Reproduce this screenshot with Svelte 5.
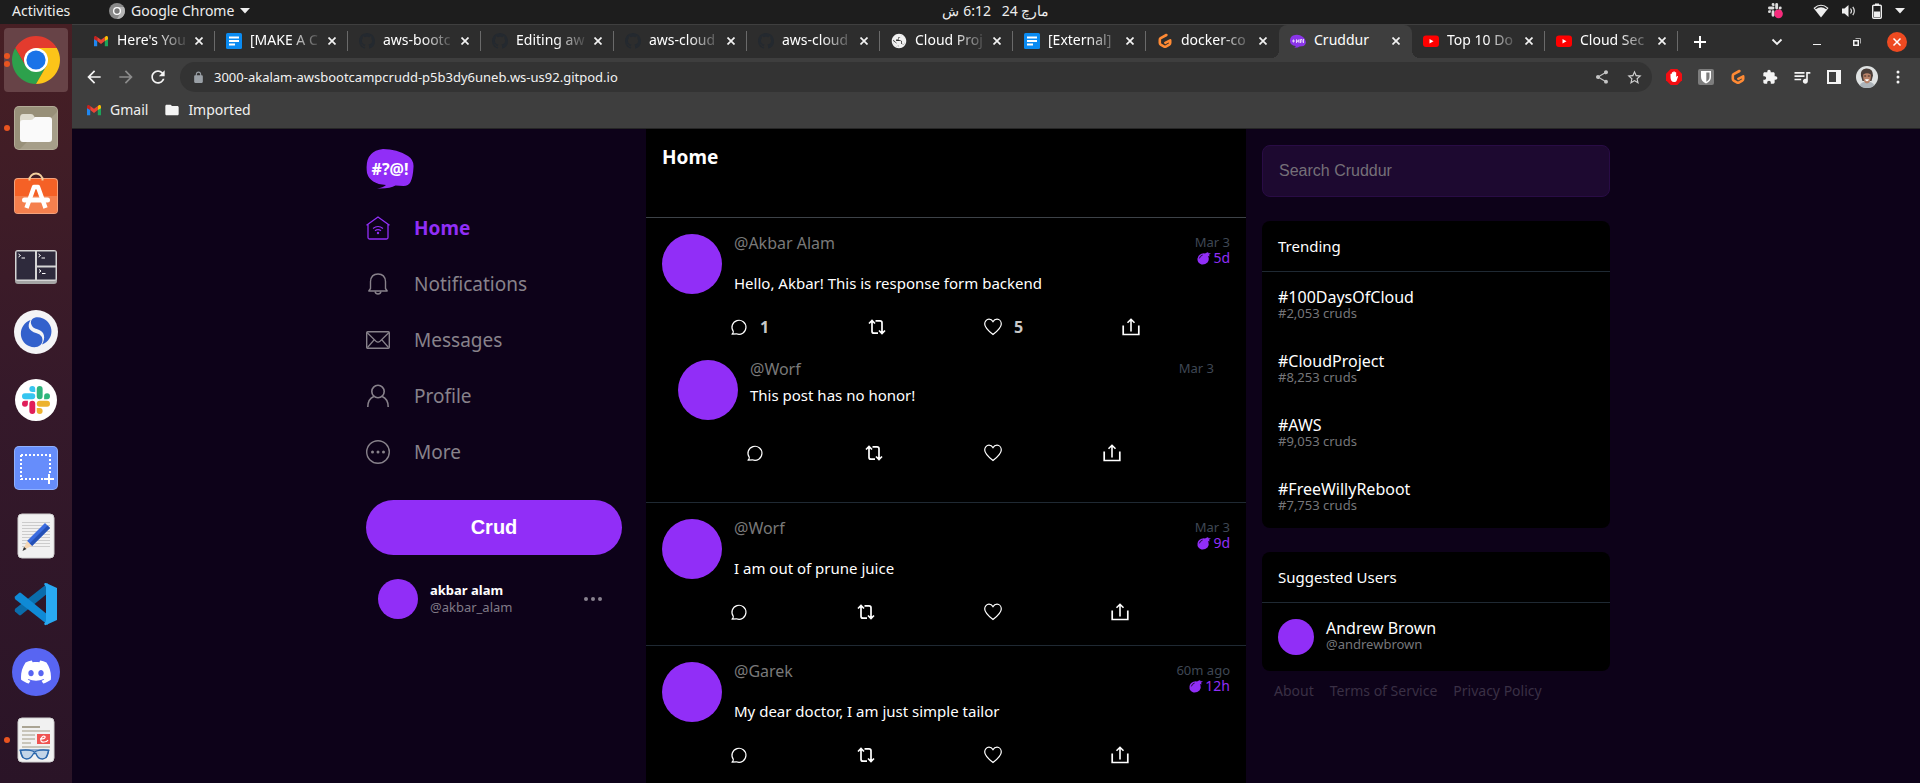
<script>
  const dock = [
    { name: 'chrome', dots: 2, active: true },
    { name: 'files', dots: 1 },
    { name: 'software', dots: 0 },
    { name: 'terminal', dots: 0 },
    { name: 'simplenote', dots: 0 },
    { name: 'slack', dots: 0 },
    { name: 'capture', dots: 0 },
    { name: 'editor', dots: 0 },
    { name: 'vscode', dots: 0 },
    { name: 'discord', dots: 0 },
    { name: 'reader', dots: 1 }
  ];

  const tabs = [
    { icon: 'gmail', title: "Here's You" },
    { icon: 'doc', title: '[MAKE A C' },
    { icon: 'github', title: 'aws-bootc' },
    { icon: 'github', title: 'Editing aw' },
    { icon: 'github', title: 'aws-cloud' },
    { icon: 'github', title: 'aws-cloud' },
    { icon: 'globe', title: 'Cloud Proj' },
    { icon: 'doc', title: '[External]' },
    { icon: 'gitpod', title: 'docker-co' },
    { icon: 'cruddur', title: 'Cruddur', active: true },
    { icon: 'youtube', title: 'Top 10 Do' },
    { icon: 'youtube', title: 'Cloud Sec' }
  ];

  const nav = [
    { icon: 'home', label: 'Home', active: true },
    { icon: 'bell', label: 'Notifications' },
    { icon: 'mail', label: 'Messages' },
    { icon: 'person', label: 'Profile' },
    { icon: 'more', label: 'More' }
  ];

  const posts = [
    {
      handle: '@Akbar Alam', time: 'Mar 3', expires: '5d',
      message: 'Hello, Akbar! This is response form backend',
      replies: 1, likes: 5,
      thread: [{ handle: '@Worf', time: 'Mar 3', message: 'This post has no honor!' }]
    },
    { handle: '@Worf', time: 'Mar 3', expires: '9d', message: 'I am out of prune juice' },
    { handle: '@Garek', time: '60m ago', expires: '12h', message: 'My dear doctor, I am just simple tailor' }
  ];

  const trending = [
    { tag: '#100DaysOfCloud', count: '#2,053 cruds' },
    { tag: '#CloudProject', count: '#8,253 cruds' },
    { tag: '#AWS', count: '#9,053 cruds' },
    { tag: '#FreeWillyReboot', count: '#7,753 cruds' }
  ];
</script>

{#snippet slackMark(a, b, c, d)}
  <path fill={a} d="M5.042 15.165a2.528 2.528 0 0 1-2.52 2.523A2.528 2.528 0 0 1 0 15.165a2.527 2.527 0 0 1 2.522-2.52h2.52v2.52zM6.313 15.165a2.527 2.527 0 0 1 2.521-2.52 2.527 2.527 0 0 1 2.521 2.52v6.313A2.528 2.528 0 0 1 8.834 24a2.528 2.528 0 0 1-2.521-2.522v-6.313z" />
  <path fill={b} d="M8.834 5.042a2.528 2.528 0 0 1-2.521-2.52A2.528 2.528 0 0 1 8.834 0a2.528 2.528 0 0 1 2.521 2.522v2.52H8.834zM8.834 6.313a2.528 2.528 0 0 1 2.521 2.521 2.528 2.528 0 0 1-2.521 2.521H2.522A2.528 2.528 0 0 1 0 8.834a2.528 2.528 0 0 1 2.522-2.521h6.312z" />
  <path fill={c} d="M18.956 8.834a2.528 2.528 0 0 1 2.522-2.521A2.528 2.528 0 0 1 24 8.834a2.528 2.528 0 0 1-2.522 2.521h-2.522V8.834zM17.688 8.834a2.528 2.528 0 0 1-2.523 2.521 2.527 2.527 0 0 1-2.52-2.521V2.522A2.527 2.527 0 0 1 15.165 0a2.528 2.528 0 0 1 2.523 2.522v6.312z" />
  <path fill={d} d="M15.165 18.956a2.528 2.528 0 0 1 2.523 2.522A2.528 2.528 0 0 1 15.165 24a2.527 2.527 0 0 1-2.52-2.522v-2.522h2.52zM15.165 17.688a2.527 2.527 0 0 1-2.52-2.523 2.526 2.526 0 0 1 2.52-2.52h6.313A2.527 2.527 0 0 1 24 15.165a2.528 2.528 0 0 1-2.522 2.523h-6.313z" />
{/snippet}

{#snippet dockIcon(name)}
  <svg width="48" height="48" viewBox="0 0 48 48" aria-hidden="true">
    {#if name === 'chrome'}
      <path fill="#e33b2e" d="M24 12H44.78A24 24 0 0 0 3.22 12L13.6 30z" />
      <path fill="#2da14c" d="M13.6 30L3.22 12A24 24 0 0 0 24 48L34.39 30z" />
      <path fill="#fcc419" d="M34.39 30L24 48A24 24 0 0 0 44.78 12H24z" />
      <circle cx="24" cy="24" r="12" fill="#fff" />
      <circle cx="24" cy="24" r="9.6" fill="#1a73e8" />
    {:else if name === 'files'}
      <rect x="2" y="2" width="44" height="44" rx="5" fill="#b3ab97" />
      <rect x="3" y="3" width="42" height="42" rx="4" fill="#989079" />
      <path d="M45 8V41a4 4 0 0 1-4 4H8z" fill="#a69e89" />
      <path d="M8 14q0-4 3-4h8q2 0 3 2l1 2v6H8z" fill="#dfdccf" />
      <path d="M11 16h8q2 0 3-2l1-1h14q3 0 3 3v19q0 3-3 3H11q-3 0-3-3V19q0-3 3-3z" fill="#fafafa" />
    {:else if name === 'software'}
      <path d="M17.5 9v-1a6.5 6.5 0 0 1 13 0v1" fill="none" stroke="#f3cf9e" stroke-width="2" />
      <rect x="2" y="6" width="44" height="36" rx="4" fill="#f4a27c" />
      <rect x="3" y="7" width="42" height="34" rx="3" fill="#f56126" />
      <path d="M3 24h42v14a3 3 0 0 1-3 3H6a3 3 0 0 1-3-3z" fill="#f5804e" />
      <path d="M30.5 5.5v3M17.5 5.5v3" stroke="#f3cf9e" stroke-width="2" />
      <path d="M14.5 36L22 15h4l7.500 21" fill="none" stroke="#fff" stroke-width="4.400" stroke-linejoin="round" />
      <rect x="10" y="25.500" width="28" height="5" rx="2.500" fill="#fff" />
    {:else if name === 'terminal'}
      <path d="M3 37h42v4q0 3-3 3H6q-3 0-3-3z" fill="#a5a5a5" />
      <rect x="3" y="10" width="42" height="31" rx="3" fill="#d5d5d5" />
      <path d="M4.500 11.500h18.500v28H4.500zM25 11.500h18.500v14H25zM25 27.500h18.500v12H25z" fill="#2e2a3c" />
      <path d="M6.500 14l2 1.500-2 1.500M9.500 18h3.500M26.500 14l2 1.500-2 1.500M29.500 18h3.500M27 29.500l2 1.500-2 1.500M30 33.500h3.500" fill="none" stroke="#fff" />
    {:else if name === 'simplenote'}
      <circle cx="24" cy="24" r="22" fill="#f4f4f6" />
      <path d="M18.500 12C6 17 6 33 17 38c7 3 13.500 0 13.500-6 0-4-3-6-6.500-7-6.500-2-9.500-6-5.500-13z" fill="#3361cc" />
      <path d="M30 36.500c13-5 12-21 1-26-7-3-13 0-12 5 1 4 4 5 7 6 6.500 2 8 8 4 15z" fill="#3361cc" />
    {:else if name === 'slack'}
      <circle cx="24" cy="24" r="21" fill="#fff" />
      <svg x="10" y="10" width="28" height="28" viewBox="0 0 24 24">{@render slackMark('#e01e5a', '#36c5f0', '#2eb67d', '#ecb22e')}</svg>
    {:else if name === 'capture'}
      <rect x="2" y="2" width="44" height="44" rx="5" fill="#8fb0ff" />
      <rect x="3" y="3" width="42" height="42" rx="4" fill="#668dfb" />
      <path d="M9 11h30M9 35h24M9 11v25M38 11v20" fill="none" stroke="#fff" stroke-width="2" stroke-dasharray="2 2" />
      <path d="M37 30v10M32 35h10" stroke="#fff" stroke-width="2" />
    {:else if name === 'editor'}
      <rect x="6" y="2" width="36" height="44" rx="4" fill="#f1f1f1" stroke="#d0d0d0" />
      <path d="M10 10.500h28M10 13.500h28M10 16.500h28M10 19.500h28M10 22.500h28M10 25.500h28M10 28.500h28M10 31.500h28M10 34.500h28" stroke="#ccc" />
      <path d="M33 11l5 5L20 34l-5-5z" fill="#3a6ce0" />
      <path d="M35.500 13.500l2.500 2.500L20 34l-2.500-2.500z" fill="#2450b5" />
      <path d="M15 29l5 5-9 4z" fill="#f6d7b4" />
      <path d="M12 35l2.500 2-4 2z" fill="#333" />
    {:else if name === 'vscode'}
      <path d="M3 31.500l4 3.500q1 .8 2 0L36 13V3L3.500 28.500q-1.500 1.500-.5 3z" fill="#0a6cab" />
      <path d="M3 16.500L7 13q1-.8 2 0l27 22v10L3.500 19.500q-1.500-1.500-.5-3z" fill="#0f8ad6" />
      <path d="M34 3l11 5v32l-11 5q-1 .5-2-1l2-3V7l-2-3q1-1.500 2-1z" fill="#29a9f2" />
    {:else if name === 'discord'}
      <circle cx="24" cy="24" r="24" fill="#5865f2" />
      <svg x="9" y="9" width="30" height="30" viewBox="0 0 24 24"><path fill="#fff" d="M20.317 4.3698a19.7913 19.7913 0 00-4.8851-1.5152.0741.0741 0 00-.0785.0371c-.211.3753-.4447.8648-.6083 1.2495-1.8447-.2762-3.68-.2762-5.4868 0-.1636-.3933-.4058-.8742-.6177-1.2495a.077.077 0 00-.0785-.037 19.7363 19.7363 0 00-4.8852 1.515.0699.0699 0 00-.0321.0277C.5334 9.0458-.319 13.5799.0992 18.0578a.0824.0824 0 00.0312.0561c2.0528 1.5076 4.0413 2.4228 5.9929 3.0294a.0777.0777 0 00.0842-.0276c.4616-.6304.8731-1.2952 1.226-1.9942a.076.076 0 00-.0416-.1057c-.6528-.2476-1.2743-.5495-1.8722-.8923a.077.077 0 01-.0076-.1277c.1258-.0943.2517-.1923.3718-.2914a.0743.0743 0 01.0776-.0105c3.9278 1.7933 8.18 1.7933 12.0614 0a.0739.0739 0 01.0785.0095c.1202.099.246.1981.3728.2924a.077.077 0 01-.0066.1276 12.2986 12.2986 0 01-1.873.8914.0766.0766 0 00-.0407.1067c.3604.698.7719 1.3628 1.225 1.9932a.076.076 0 00.0842.0286c1.961-.6067 3.9495-1.5219 6.0023-3.0294a.077.077 0 00.0313-.0552c.5004-5.177-.8382-9.6739-3.5485-13.6604a.061.061 0 00-.0312-.0286zM8.02 15.3312c-1.1825 0-2.1569-1.0857-2.1569-2.419 0-1.3332.9555-2.4189 2.157-2.4189 1.2108 0 2.1757 1.0952 2.1568 2.419 0 1.3332-.9555 2.4189-2.1569 2.4189zm7.9748 0c-1.1825 0-2.1569-1.0857-2.1569-2.419 0-1.3332.9554-2.4189 2.1569-2.4189 1.2108 0 2.1757 1.0952 2.1568 2.419 0 1.3332-.946 2.4189-2.1568 2.4189Z" /></svg>
    {:else}
      <rect x="6" y="2" width="36" height="44" rx="4" fill="#f1f1f1" stroke="#d0d0d0" />
      <path d="M10 11h18" stroke="#aaa494" stroke-width="2" />
      <path d="M10 15h28M10 19h13M10 23h13M10 27h9M10 31h28" stroke="#c9c5ba" stroke-width="2" />
      <rect x="25" y="18" width="13" height="10" fill="#ef5350" />
      <path d="M28 23q6 0 5-2.500-2-1.500-4 2-1 4 3 3.500 3 0 4-2" fill="none" stroke="#fff" stroke-width="1.200" />
      <path d="M8.500 34.500q6-1.500 12 .5l2 1 2-1q6-2 12-.5-.5 8-6 8.500-5 0-6.500-5.500h-2.500Q19 43 14.500 43 9 42.500 8.500 34.500z" fill="#c3d5e8" stroke="#2a66ab" stroke-width="1.300" />
      <path d="M7.500 34h30M8 34l3 8M37 34l-3 8" stroke="#2a66ab" stroke-width="1.200" />
    {/if}
  </svg>
{/snippet}

{#snippet favicon(name)}
  <svg width="16" height="16" viewBox="0 0 16 16" aria-hidden="true">
    {#if name === 'gmail'}
      <path d="M1 5v8.300h3.200V7.500z" fill="#1f87f0" />
      <path d="M15 5v8.300h-3.200V7.500z" fill="#1da45a" />
      <path d="M4.200 3.900v4.200L8 11l3.800-2.900V3.900L8 6.800z" fill="#ea4335" />
      <path d="M1 6.200V4.500q0-2 1.800-1.500l1.400.9v4.200z" fill="#c5221f" />
      <path d="M15 6.200V4.500q0-2-1.800-1.500l-1.400.9v4.200z" fill="#fbbc04" />
    {:else if name === 'doc'}
      <rect width="16" height="16" rx="1.500" fill="#0a8bf2" />
      <path d="M3 4.500h10M3 8h10M3 11.500h6" stroke="#fff" stroke-width="1.800" />
    {:else if name === 'github'}
      <path fill="#24292f" d="M8 0C3.580 0 0 3.580 0 8c0 3.540 2.290 6.530 5.470 7.590.4.070.55-.17.55-.38 0-.19-.01-.82-.01-1.490-2.010.37-2.530-.49-2.690-.94-.09-.23-.48-.94-.82-1.130-.28-.15-.68-.52-.01-.53.63-.01 1.080.58 1.230.82.72 1.210 1.870.87 2.330.66.070-.52.28-.87.51-1.070-1.780-.2-3.640-.89-3.640-3.950 0-.87.31-1.590.82-2.150-.08-.2-.36-1.020.08-2.120 0 0 .67-.21 2.200.82.64-.18 1.320-.27 2-.27s1.360.09 2 .27c1.530-1.040 2.200-.82 2.200-.82.44 1.100.16 1.920.08 2.120.51.56.82 1.270.82 2.150 0 3.070-1.870 3.750-3.650 3.950.29.25.54.73.54 1.480 0 1.070-.01 1.930-.01 2.200 0 .21.15.46.55.38A8.010 8.010 0 0 0 16 8c0-4.420-3.580-8-8-8z" />
    {:else if name === 'globe'}
      <svg width="16" height="16" viewBox="1 1 22 22"><path fill="#f1f1f1" d="M12 2C6.480 2 2 6.480 2 12s4.480 10 10 10 10-4.480 10-10S17.520 2 12 2zm-1 17.930c-3.950-.49-7-3.850-7-7.930 0-.62.08-1.210.21-1.790L9 15v1c0 1.100.9 2 2 2v1.930zm6.900-2.540c-.26-.81-1-1.390-1.900-1.390h-1v-3c0-.55-.45-1-1-1H8v-2h2c.55 0 1-.45 1-1V7h2c1.100 0 2-.9 2-2v-.41c2.930 1.190 5 4.060 5 7.410 0 2.080-.8 3.970-2.100 5.390z" /><path fill="#f1f1f1" d="M12.500 3.500q6 .5 8 6v4l-2 3.500-2.500-1.500v-3q-1-1.500-3-1.500l-2-1 1-2 2-1.500zM4 12l6 4 1 4.500Q5 19.500 3.500 13z" /></svg>
    {:else if name === 'gitpod'}
      <path d="M9.400 2L3.700 5.200q-.9.500-.9 1.500v3.400q0 1 .9 1.500l3.500 2q.8.400 1.600 0l3.500-2q.9-.5.9-1.500V7.400L8.300 9.800" fill="none" stroke="#ff8a34" stroke-width="2.600" stroke-linejoin="round" stroke-linecap="round" />
    {:else if name === 'cruddur'}
      <path d="M5 2q4-1 8 2 4 3 2.500 7-1 2.500-6 2.500Q8 15 4 14.800q2-.8 1.500-1.800Q-.5 12 0 7q.5-4.500 5-5z" fill="#8a35e8" />
      <path d="M2 8h3M3.500 6.500v3M6.500 10V6.500L8 9l1-2.500V10M10.500 10V6.500h1.500v3M13.500 6v4" fill="none" stroke="#e3d0fa" />
    {:else}
      <rect y="2.500" width="16" height="11.500" rx="3" fill="#f00" />
      <path d="M6.500 6v4.500l4-2.250z" fill="#fff" />
    {/if}
  </svg>
{/snippet}

{#snippet glyph(d, color, size = 20)}
  <svg width={size} height={size} viewBox="0 0 24 24" fill={color} aria-hidden="true"><path {d} /></svg>
{/snippet}

{#snippet navIcon(name)}
  <svg width="24" height="24" viewBox="0 0 24 24" fill="none" stroke="currentColor" aria-hidden="true">
    {#if name === 'home'}
      <path d="M.5 9.300L12 1l11.500 8.300M2 8.500v13q0 1.500 1.500 1.500h17q1.500 0 1.500-1.500v-13" stroke-width="1.300" />
      <path d="M7 12.500q5-4 10 0M9 14.700q3-2.200 6 0" stroke-width="1.200" />
      <circle cx="12" cy="17" r="1.200" fill="currentColor" stroke="none" />
    {:else if name === 'bell'}
      <path d="M4.500 16.500V9.500Q5 2 12 2t7.500 7.500v7l1.700 2.500H2.800z" stroke-width="1.400" stroke-linejoin="round" />
      <path d="M9 19.500q.5 2.500 3 2.500t3-2.500" stroke-width="1.400" />
    {:else if name === 'mail'}
      <rect x=".7" y="3.700" width="22.600" height="16.600" rx="1" stroke-width="1.400" />
      <path d="M1 4.500l9 8.800q2 1.800 4 0l9-8.800M1.500 19.500L8 12M22.500 19.500L16 12" stroke-width="1.200" />
    {:else if name === 'person'}
      <circle cx="12" cy="7.500" r="6.200" stroke-width="1.600" />
      <path d="M1.800 23q0-8 6-10.500M22.200 23q0-8-6-10.500" stroke-width="1.600" />
    {:else}
      <circle cx="12" cy="12" r="11.300" stroke-width="1.400" />
      <g fill="currentColor" stroke="none"><circle cx="6.500" cy="12" r="1.500" /><circle cx="12" cy="12" r="1.500" /><circle cx="17.500" cy="12" r="1.500" /></g>
    {/if}
  </svg>
{/snippet}

{#snippet action(name, label, count)}
  <button class="action" aria-label={label}>
    <svg width="18" height="18" viewBox="0 0 18 18" fill="none" stroke="#fff" aria-hidden="true">
      {#if name === 'reply'}
        <path d="M3.300 13.400A7 7 0 1 1 6.400 15.800L2 16.200q1.500-1.300 1.300-2.800z" stroke-width="1.200" stroke-linejoin="round" />
      {:else if name === 'repost'}
        <path d="M4 2.800v10.400q0 2 2 2h4M7.500 2.800H12q2 0 2 2v10.400M1 5.500l3-3 3 3M11 12.500l3 3 3-3" stroke-width="1.700" />
      {:else if name === 'like'}
        <path d="M9 16.500C4 12.500.7 9.500.7 5.900.7 3.200 2.600 1.200 5 1.200c1.700 0 3.100.9 4 2.400.9-1.500 2.300-2.400 4-2.400 2.400 0 4.300 2 4.300 4.700 0 3.600-3.300 6.600-8.300 10.600z" stroke-width="1.200" />
      {:else}
        <path d="M1.200 7.500V16.500H16.800V7.500" stroke-width="1.700" />
        <path d="M9 13.500V1.500M5.500 4.700L9 1.300l3.500 3.400" stroke-width="1.600" />
      {/if}
    </svg>
    {#if count}<span>{count}</span>{/if}
  </button>
{/snippet}

{#snippet crud(post, nested = false)}
  <article class="crud" class:nested>
    <div class="avatar"></div>
    <div class="body">
      <div class="content">
        <div class="head">
          <a class="handle" href="#user">{post.handle}</a>
          <div class="times">
            <span>{post.time}</span>
            {#if post.expires}
              <span class="expires">
                <svg width="14" height="14" viewBox="0 0 14 14" aria-hidden="true">
                  <path d="M8 2.500l2-1q1.500-.5 1.500.7H14l-1.800 1.400.3 2-1.600-.7.500 1Q12.500 9 10.500 11.500 8 14 4.500 13.500 0 12 .5 7.500 1 4 4.500 2.800 6.500 2 8 2.500z" fill="#912ef7" />
                  <path d="M2.500 7Q3 4.800 5.200 4.200" fill="none" stroke="#1b0a30" stroke-linecap="round" />
                </svg>
                {post.expires}
              </span>
            {/if}
          </div>
        </div>
        <p>{post.message}</p>
      </div>
      <div class="actions">
        {@render action('reply', 'Reply', post.replies)}
        {@render action('repost', 'Repost', 0)}
        {@render action('like', 'Like', post.likes)}
        {@render action('share', 'Share', 0)}
      </div>
    </div>
  </article>
{/snippet}

<div class="desktop">
  <header class="topbar">
    <span class="activities">Activities</span>
    <div class="appmenu">
      <svg width="16" height="16" viewBox="0 0 48 48" aria-hidden="true">
        <circle cx="24" cy="24" r="24" fill="#8a8a8a" />
        <path fill="#b5b5b5" d="M34.390 30L24 48A24 24 0 0 0 44.780 12H24z" />
        <circle cx="24" cy="24" r="12" fill="#fff" /><circle cx="24" cy="24" r="8" fill="#777" />
      </svg>
      <span>Google Chrome</span>
      <svg width="10" height="6" viewBox="0 0 10 6" aria-hidden="true"><path d="M0 0h10L5 5.500z" fill="#eee" /></svg>
    </div>
    <time class="clock" dir="rtl">مارچ 24 &nbsp;&nbsp;6:12 ش</time>
    <div class="tray">
      <svg class="tray-slack" width="16" height="16" viewBox="0 0 28 28" aria-hidden="true">
        {@render slackMark('#ddd', '#ddd', '#ddd', '#ddd')}
        <circle cx="18.500" cy="19" r="7.500" fill="#f62b7c" />
      </svg>
      <svg width="16" height="16" viewBox="0 0 16 16" aria-hidden="true"><path d="M8 14.500L.5 5Q8-1.500 15.500 5z" fill="#eee" /><path d="M2 5.200q6-4.700 12 0l-.8 1Q8 2.200 2.800 6.200z" fill="#1d1d1d" /></svg>
      <svg width="16" height="16" viewBox="0 0 16 16" aria-hidden="true"><path d="M1 5.500h2.500L7.500 2v12L3.500 10.500H1z" fill="#eee" /><path d="M9.500 5.500q2 2.500 0 5M11.800 3.800q3 4.200 0 8.400" fill="none" stroke="#ddd" stroke-width="1.200" /></svg>
      <svg width="16" height="16" viewBox="0 0 16 16" aria-hidden="true"><rect x="3.700" y="2.200" width="8.600" height="13" rx="1" fill="none" stroke="#eee" stroke-width="1.400" /><path d="M6 .5h4v1.500H6zM5 8.500h6v5.500H5z" fill="#eee" /></svg>
      <svg width="10" height="6" viewBox="0 0 10 6" aria-hidden="true"><path d="M0 0h10L5 5.500z" fill="#eee" /></svg>
    </div>
  </header>

  <aside class="dock" aria-label="Dock">
    {#each dock as item}
      <button class="dock-item" class:current={item.active} aria-label={item.name}>
        {#if item.dots}
          <span class="dots">{#each Array(item.dots) as _}<i></i>{/each}</span>
        {/if}
        {@render dockIcon(item.name)}
      </button>
    {/each}
  </aside>

  <section class="window">
    <div class="tabstrip">
      {#each tabs as tab}
        <div class="tab" class:active={tab.active}>
          {@render favicon(tab.icon)}
          <span class="tab-title">{tab.title}</span>
          <button class="close" aria-label="Close tab">
            <svg width="8" height="8" viewBox="0 0 8 8" aria-hidden="true"><path d="M.5.5l7 7M7.500.5l-7 7" stroke="#f2f2f2" stroke-width="1.700" /></svg>
          </button>
        </div>
      {/each}
      <button class="newtab" aria-label="New tab">
        <svg width="12" height="12" viewBox="0 0 12 12" aria-hidden="true"><path d="M6 0v12M0 6h12" stroke="#fff" stroke-width="2" /></svg>
      </button>
      <div class="wincontrols">
        <button aria-label="Search tabs"><svg width="20" height="20" viewBox="0 0 20 20" aria-hidden="true"><path d="M5.500 7.500l4.500 4.500 4.500-4.500" fill="none" stroke="#f2f2f2" stroke-width="1.800" /></svg></button>
        <button aria-label="Minimize"><svg width="20" height="20" viewBox="0 0 20 20" aria-hidden="true"><path d="M6 12.500h8" stroke="#f2f2f2" /></svg></button>
        <button aria-label="Restore"><svg width="20" height="20" viewBox="0 0 20 20" aria-hidden="true"><path d="M6.750 8.750h4.500v4.500h-4.500z" fill="none" stroke="#f2f2f2" stroke-width="1.500" /><path d="M8.500 6.500h5v5" fill="none" stroke="#aaa" /></svg></button>
        <button aria-label="Close"><svg width="20" height="20" viewBox="0 0 20 20" aria-hidden="true"><circle cx="10" cy="10" r="10" fill="#ee4a21" /><path d="M6.500 6.500l7 7M13.500 6.500l-7 7" stroke="#fff" stroke-width="1.500" /></svg></button>
      </div>
    </div>

    <div class="toolbar">
      <button aria-label="Back">{@render glyph('M20 11H7.830l5.590-5.590L12 4l-8 8 8 8 1.410-1.410L7.830 13H20v-2z', '#f4f4f4')}</button>
      <button aria-label="Forward">{@render glyph('M12 4l-1.410 1.410L16.170 11H4v2h12.170l-5.580 5.590L12 20l8-8z', '#8c8c8c')}</button>
      <button aria-label="Reload">{@render glyph('M17.650 6.350C16.200 4.900 14.210 4 12 4c-4.420 0-7.990 3.580-7.990 8s3.570 8 7.990 8c3.730 0 6.840-2.550 7.730-6h-2.080c-.82 2.330-3.040 4-5.650 4-3.310 0-6-2.690-6-6s2.690-6 6-6c1.660 0 3.140.69 4.220 1.780L13 11h7V4l-2.350 2.350z', '#f4f4f4')}</button>
      <div class="omnibox">
        {@render glyph('M18 8h-1V6c0-2.760-2.240-5-5-5S7 3.240 7 6v2H6c-1.100 0-2 .9-2 2v10c0 1.100.9 2 2 2h12c1.100 0 2-.9 2-2V10c0-1.100-.9-2-2-2zM9 6c0-1.660 1.340-3 3-3s3 1.340 3 3v2H9V6z', '#9aa0a6', 13)}
        <input aria-label="Address" value="3000-akalam-awsbootcampcrudd-p5b3dy6uneb.ws-us92.gitpod.io" />
        <button aria-label="Share page">{@render glyph('M18 16.080c-.76 0-1.440.3-1.960.77L8.910 12.700c.05-.23.09-.46.09-.7s-.04-.47-.09-.7l7.050-4.110c.54.5 1.250.81 2.040.81 1.660 0 3-1.340 3-3s-1.340-3-3-3-3 1.340-3 3c0 .24.04.47.09.7L8.040 9.810C7.500 9.310 6.790 9 6 9c-1.660 0-3 1.340-3 3s1.340 3 3 3c.79 0 1.500-.31 2.040-.81l7.120 4.160c-.05.21-.08.43-.08.65 0 1.610 1.310 2.920 2.920 2.920s2.920-1.310 2.920-2.920-1.310-2.920-2.920-2.920z', '#c4c4c4', 16)}</button>
        <button aria-label="Bookmark page">{@render glyph('M22 9.240l-7.190-.62L12 2 9.190 8.630 2 9.240l5.460 4.730L5.820 21 12 17.270 18.180 21l-1.630-7.030L22 9.240zM12 15.400l-3.760 2.270 1-4.280-3.320-2.880 4.380-.38L12 6.100l1.710 4.040 4.380.38-3.320 2.880 1 4.280L12 15.400z', '#d0d0d0', 17)}</button>
      </div>
      <button aria-label="AdBlock">
        <svg width="16" height="16" viewBox="0 0 16 16" aria-hidden="true"><path d="M4.700 0h6.600L16 4.700v6.600L11.300 16H4.700L0 11.300V4.700z" fill="#f40d12" /><path d="M4.500 8V5q.7-1 1.400 0V3.500q.7-1 1.400 0v-.7q.8-1 1.500 0v.7q.7-1 1.400 0V8l1-1q1.200-.3.8.7L10.500 12q-.5 1-2 1-4 .3-4-5z" fill="#fff" /></svg>
      </button>
      <button aria-label="Password manager">
        <svg width="16" height="16" viewBox="0 0 16 16" aria-hidden="true"><rect width="16" height="16" rx="2" fill="#7d7d7d" /><path d="M3 2h10v6q0 4-5 6.500Q3 12 3 8z" fill="#fff" /><path d="M8.300 3.500h3.200V8q0 3-3.200 4.800z" fill="#7d7d7d" /></svg>
      </button>
      <button aria-label="Gitpod">{@render favicon('gitpod')}</button>
      <button aria-label="Extensions">{@render glyph('M20.500 11H19V7c0-1.100-.9-2-2-2h-4V3.500C13 2.120 11.880 1 10.500 1S8 2.120 8 3.500V5H4c-1.100 0-1.990.9-1.990 2v3.800H3.500c1.490 0 2.700 1.210 2.700 2.700s-1.210 2.700-2.700 2.700H2V20c0 1.100.9 2 2 2h3.800v-1.500c0-1.490 1.210-2.700 2.700-2.700 1.490 0 2.700 1.210 2.700 2.700V22H17c1.100 0 2-.9 2-2v-4h1.500c1.380 0 2.500-1.120 2.500-2.500S21.880 11 20.500 11z', '#f4f4f4', 16)}</button>
      <button aria-label="Media">{@render glyph('M15 6H3v2h12V6zm0 4H3v2h12v-2zM3 16h8v-2H3v2zM17 6v8.180c-.31-.11-.65-.18-1-.18-1.660 0-3 1.340-3 3s1.340 3 3 3 3-1.340 3-3V8h3V6h-5z', '#f4f4f4')}</button>
      <button aria-label="Side panel">
        <svg width="14" height="14" viewBox="0 0 14 14" aria-hidden="true"><path d="M0 0h14v14H0zM2 2v10h7V2z" fill="#f4f4f4" fill-rule="evenodd" /></svg>
      </button>
      <button aria-label="Account">
        <svg width="22" height="22" viewBox="0 0 22 22" aria-hidden="true">
          <circle cx="11" cy="11" r="11" fill="#dfe2e2" />
          <path d="M3.500 19.500q2-4 7.500-4t7.500 4Q15.500 22 11 22t-7.500-2.500z" fill="#adb4ba" />
          <path d="M5 10Q4 3 10 2.500q7-.5 7 7L15.500 15h-9z" fill="#4a3d38" />
          <path d="M7.200 8.500q3.800-2.500 7.600 0 .4 8.500-3.800 9-4.200-.5-3.800-9z" fill="#b98268" />
          <path d="M8.200 10h2M11.800 10h2" stroke="#3a2822" /><path d="M9 13.200h4q-.5 2-2 2t-2-2z" fill="#fff" />
        </svg>
      </button>
      <button aria-label="Menu"><svg width="4" height="14" viewBox="0 0 4 14" fill="#f4f4f4" aria-hidden="true"><circle cx="2" cy="2" r="1.500" /><circle cx="2" cy="7" r="1.500" /><circle cx="2" cy="12" r="1.500" /></svg></button>
    </div>

    <div class="bookmarks">
      <a href="#gmail">{@render favicon('gmail')}<span>Gmail</span></a>
      <a href="#imported">{@render glyph('M10 4H4c-1.100 0-1.990.9-1.990 2L2 18c0 1.100.9 2 2 2h16c1.100 0 2-.9 2-2V8c0-1.100-.9-2-2-2h-8l-2-2z', '#f4f4f4', 16)}<span>Imported</span></a>
    </div>

    <div class="page">
      <nav class="sidebar">
        <svg class="logo" width="48" height="40" viewBox="0 0 48 40" role="img" aria-label="Cruddur">
          <path d="M17 0Q31 0 42 7q6 4 5.500 11-.5 10-3 15-2 4-7 4l-8-.5Q24 40 11 39.500q6-1 9-3.500Q4 35 1 24-2 2 17 0z" fill="#912ef7" />
          <text x="24" y="26" text-anchor="middle">#?@!</text>
        </svg>
        {#each nav as item}
          <a class="navlink" class:active={item.active} href={'#' + item.icon}>{@render navIcon(item.icon)}<span>{item.label}</span></a>
        {/each}
        <button class="post">Crud</button>
        <div class="profile">
          <div class="avatar"></div>
          <div class="who"><strong>akbar alam</strong><span>@akbar_alam</span></div>
          <button aria-label="Account options"><svg width="20" height="6" viewBox="0 0 20 6" fill="#88828f" aria-hidden="true"><circle cx="3" cy="3" r="2" /><circle cx="10" cy="3" r="2" /><circle cx="17" cy="3" r="2" /></svg></button>
        </div>
      </nav>

      <main class="feed">
        <div class="feed-head"><h1>Home</h1></div>
        {#each posts as post}
          <div class="entry">
            {@render crud(post)}
            {#each post.thread ?? [] as reply}
              {@render crud(reply, true)}
            {/each}
          </div>
        {/each}
      </main>

      <aside class="rail">
        <input class="search" type="text" placeholder="Search Cruddur" aria-label="Search Cruddur" />
        <section class="card">
          <h2>Trending</h2>
          {#each trending as item}
            <a class="trend" href="#trend"><span>{item.tag}</span><small>{item.count}</small></a>
          {/each}
        </section>
        <section class="card">
          <h2>Suggested Users</h2>
          <div class="suggested">
            <div class="avatar"></div>
            <div class="trend-text"><span>Andrew Brown</span><small>@andrewbrown</small></div>
          </div>
        </section>
        <footer><a href="#about">About</a><a href="#terms">Terms of Service</a><a href="#privacy">Privacy Policy</a></footer>
      </aside>
    </div>
  </section>
</div>

<style>
  :global(body) { margin: 0; background: #0d0219; }
  * { box-sizing: border-box; }
  svg { display: block; flex: none; }
  button { background: none; border: 0; padding: 0; display: grid; place-items: center; cursor: pointer; }
  a { color: inherit; text-decoration: none; }

  .desktop {
    height: 100vh; overflow: hidden;
    display: grid; grid-template: 24px minmax(0, 1fr) / 72px minmax(0, 1fr);
    font: 14px/20px "Noto Sans", sans-serif; color: #fff;
  }

  .topbar {
    grid-column: 1 / -1; background: #1d1d1d; color: #eee;
    display: grid; grid-template-columns: 72px 1fr auto 1fr; align-items: center; white-space: nowrap;
    padding-bottom: 3px;
  }
  .activities { padding-left: 12px; }
  .appmenu { display: flex; align-items: center; gap: 6px; padding-left: 37px; }
  .tray { display: flex; align-items: center; justify-content: flex-end; gap: 12px; padding-right: 15px; }
  .tray-slack { margin-right: 17px; }
  .tray svg:last-child { margin-left: -2px; }

  .dock { background: linear-gradient(#471f24, #35192a 50%, #2a1427); padding-top: 2px; overflow: hidden; }
  .dock-item { position: relative; width: 64px; height: 64px; margin: 2px 4px 4px; border-radius: 4px; }
  .dock-item.current { background: #674347; }
  .dots { position: absolute; left: 0; top: 0; bottom: 0; display: flex; flex-direction: column; justify-content: center; gap: 2px; }
  .dots i { width: 6px; height: 6px; border-radius: 50%; background: #e95420; }

  .window { display: flex; flex-direction: column; min-width: 0; overflow: hidden; }
  .tabstrip { height: 34px; flex: none; display: flex; padding-left: 10px; background: #2d2d2d; border-top: 1px solid #3f3f3f; }
  .tab { position: relative; flex: 0 1 133px; min-width: 0; display: flex; align-items: center; padding: 0 11px 1px; }
  .tab::after { content: ""; position: absolute; right: 0; top: 6px; height: 20px; width: 1px; background: #6a6a6a; }
  .tab:has(+ .active)::after { display: none; }
  .tab.active { background: #3e3e3e; border-radius: 8px 8px 0 0; }
  .tab.active::before, .tab.active::after {
    content: ""; position: absolute; top: auto; bottom: 0; width: 8px; height: 8px;
    background: radial-gradient(circle at 0 0, transparent 8px, #3e3e3e 8px);
  }
  .tab.active::before { left: -8px; }
  .tab.active::after { right: -8px; background: radial-gradient(circle at 100% 0, transparent 8px, #3e3e3e 8px); }
  .tab-title {
    flex: 1; min-width: 0; margin: 0 4px 0 8px; line-height: 18px; padding-bottom: 2px; white-space: nowrap;
    mask-image: linear-gradient(90deg, #000 calc(100% - 34px), transparent);
  }
  .tab.active .tab-title { mask-image: none; }
  .close { width: 10px; height: 16px; }
  .newtab { width: 24px; margin-left: 10px; }
  .wincontrols { margin-left: auto; display: flex; gap: 20px; padding-right: 13px; }

  .toolbar { height: 38px; flex: none; display: flex; align-items: center; gap: 12px; padding: 0 12px; background: #3e3e3e; }
  .toolbar > button { width: 20px; height: 28px; }
  .omnibox { flex: 1; min-width: 0; height: 30px; border-radius: 15px; background: #333; display: flex; align-items: center; gap: 9px; padding: 0 8px 0 12px; }
  .omnibox input { flex: 1; min-width: 0; border: 0; padding: 0; background: none; color: #f2f2f2; font: 13px "Noto Sans", sans-serif; outline: 0; }
  .omnibox button { width: 20px; height: 28px; }
  .omnibox button + button { margin-left: 3px; }
  .bookmarks { height: 33px; flex: none; display: flex; gap: 16px; padding: 0 14px 4px; background: #3e3e3e; border-bottom: 1px solid #262626; color: #f0f0f0; }
  .bookmarks a { display: flex; align-items: center; gap: 8px; }

  .page { flex: 1; min-height: 0; background: #0d0219; display: grid; grid-template-columns: 300px 600px 400px; justify-content: center; }
  .avatar { background: #912ef7; border-radius: 50%; flex: none; }

  .sidebar { padding: 20px 24px 0 20px; }
  .logo text { font: 700 16px "Noto Sans", sans-serif; fill: #fff; }
  .navlink { display: flex; align-items: center; gap: 24px; height: 56px; font-size: 19px; color: #88828b; }
  .logo { margin-bottom: 11px; }
  .navlink.active { color: #912ef7; font-weight: 700; }
  .post { width: 100%; height: 55px; margin-top: 20px; border-radius: 28px; background: #912ef7; color: #fff; font: 700 20px "Liberation Sans", sans-serif; }
  .profile { display: flex; align-items: center; gap: 12px; padding: 24px 19px 0 12px; }
  .profile .avatar { width: 40px; height: 40px; }
  .who { flex: 1; display: grid; font-size: 13px; line-height: 17px; color: #807a87; }
  .who strong { color: #fff; }

  .feed { background: #000; min-width: 0; }
  .feed-head { height: 89px; padding: 16px; border-bottom: 1px solid #3d4248; }
  h1 { margin: 0; font-size: 19px; line-height: 24px; }
  .entry { border-bottom: 1px solid #1f2933; }
  .crud { display: flex; gap: 12px; padding: 16px; }
  .crud.nested { padding: 0 32px 32px; }
  .crud .avatar { width: 60px; height: 60px; }
  .body { flex: 1; min-width: 0; }
  .content { min-height: 60px; }
  .head { display: flex; justify-content: space-between; align-items: flex-start; line-height: 18px; }
  .handle { font-size: 16px; color: #797979; }
  .times { display: grid; justify-items: end; font-size: 13px; line-height: 16px; color: #3f4754; min-height: 18px; }
  .expires { display: flex; align-items: center; gap: 2px; font-size: 14px; color: #912ef7; }
  .crud p { margin: 8px 0 0; font-size: 15px; line-height: 18px; }
  .actions { display: flex; margin: 0 -8px 0 -4px; padding: 24px 0 8px; }
  .action { flex: 1 0 auto; display: flex; align-items: center; justify-content: flex-start; gap: 12px; height: 18px; color: #c8c8c8; font: 700 16px/18px "Noto Sans", sans-serif; }

  .rail { padding: 16px 36px 0 16px; min-width: 0; }
  .search { display: block; width: 100%; height: 52px; padding: 0 16px; border: 1px solid #290c45; border-radius: 8px; background: #1d0930; color: #fff; font: 16px "Liberation Sans", sans-serif; outline: 0; }
  .search::placeholder { color: #757078; opacity: 1; }
  .card { margin-top: 24px; border-radius: 8px; background: #000; }
  h2 { margin: 0; padding: 15px 16px; font-size: 15px; line-height: 20px; font-weight: 400; border-bottom: 1px solid #1f2933; }
  .trend, .trend-text { display: grid; align-content: start; font-size: 16px; line-height: 18px; }
  .trend { padding: 16px 16px 15px; }
  small { font-size: 13px; line-height: 15px; color: #76767a; }
  .suggested { display: flex; gap: 12px; padding: 16px; }
  .suggested .avatar { width: 36px; height: 36px; }
  footer { display: flex; gap: 16px; padding: 10px 12px; font-size: 14px; color: #3a3045; }
</style>
